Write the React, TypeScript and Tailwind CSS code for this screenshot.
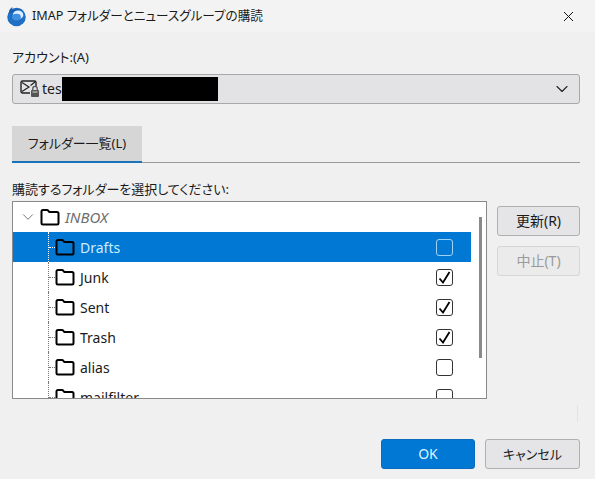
import React from 'react';
import { ChevronDown, X } from 'lucide-react';

const FONT = "font-['Noto_Sans','Noto_Sans_CJK_JP',sans-serif] [font-feature-settings:'palt']";

const FolderIcon = ({ className = '' }: { className?: string }) => (
  <svg width="20" height="18" viewBox="0 0 20 18" fill="none" className={className}>
    <path
      d="M1.5 15V3.5A1.5 1.5 0 0 1 3 2h4c.5 0 .9.2 1.2.6l1 1.4H17a1.5 1.5 0 0 1 1.5 1.5V15a1.5 1.5 0 0 1-1.5 1.5H3A1.5 1.5 0 0 1 1.5 15Z"
      stroke="#000"
      strokeWidth="2"
      strokeLinejoin="round"
    />
  </svg>
);

const AppLogo = () => (
  <svg width="21" height="21" viewBox="0 0 20 20">
    <circle cx="10" cy="10.5" r="8.8" fill="#1f6fc4" />
    <path d="M3 4.5C3.5 3 5 2 6 1 5.8 3 6 3.5 7 4 9 2.5 13 2 16 4 12 3.5 9 5 9 5L3 7Z" fill="#1a5fb0" />
    <ellipse cx="11.5" cy="8.5" rx="5" ry="4.2" fill="#dbeeff" />
    <ellipse cx="10" cy="10.5" rx="4.2" ry="3.2" fill="#3f8fe0" />
  </svg>
);

const AccountIcon = () => (
  <svg width="20" height="18" viewBox="0 0 20 18" fill="none">
    <path d="M10 13H2.5A1.5 1.5 0 0 1 1 11.5v-9A1.5 1.5 0 0 1 2.5 1h12A1.5 1.5 0 0 1 16 2.5V6" stroke="#222" strokeWidth="1.4" />
    <path d="M2 2.5 9 7l-7 4.5M15 2 10.5 5.5" stroke="#222" strokeWidth="1.2" />
    <rect x="11" y="10" width="8" height="7" rx="1" fill="#555" />
    <path d="M12.8 10V8.6a2.2 2.2 0 0 1 4.4 0V10" stroke="#555" strokeWidth="1.3" />
    <rect x="12.5" y="11.5" width="5" height="1" fill="#ddd" />
  </svg>
);

const Checkbox = ({ checked, selected }: { checked?: boolean; selected?: boolean }) => (
  <span
    className={`flex h-[17px] w-[17px] shrink-0 items-center justify-center rounded-[3px] border-[1.5px] ${
      selected ? 'border-[#9fd3f7]' : 'border-[#333333] bg-white'
    }`}
  >
    {checked && (
      <svg width="13" height="13" viewBox="0 0 13 13" fill="none">
        <path d="M1.5 7.5 5 11.5 11.5 1" stroke="#000" strokeWidth="1.8" />
      </svg>
    )}
  </span>
);

const folders = [
  { name: 'Drafts', selected: true },
  { name: 'Junk', checked: true },
  { name: 'Sent', checked: true },
  { name: 'Trash', checked: true },
  { name: 'alias' },
  { name: 'mailfilter' },
];

const FolderRow = ({ name, checked, selected }: { name: string; checked?: boolean; selected?: boolean }) => (
  <div className={`flex h-[30px] shrink-0 items-center pr-[18px] ${selected ? 'bg-[#0078d4] text-[#cdeeff]' : 'text-[#1a1a1a]'}`}>
    <span className={`ml-[35px] h-full border-l border-dotted ${selected ? 'border-white' : 'border-[#777777]'}`} />
    <span className={`w-[6px] border-t border-dotted ${selected ? 'border-white' : 'border-[#777777]'}`} />
    <FolderIcon />
    <span className="ml-[5px] flex-1 pt-[1px] text-[14px]">{name}</span>
    <Checkbox checked={checked} selected={selected} />
  </div>
);

const Button = ({ children, className = '', disabled }: { children: React.ReactNode; className?: string; disabled?: boolean }) => (
  <button
    className={`flex h-[30px] items-center justify-center rounded-[3px] border text-[14px] ${
      disabled ? 'border-[#d6d6d6] bg-[#ebebeb] text-[#9a9a9a]' : 'border-[#b0b0b0] bg-[#e5e5e7] text-[#1a1a1a]'
    } ${className}`}
  >
    {children}
  </button>
);

export default function App() {
  return (
    <div className={`flex h-[479px] w-[595px] flex-col overflow-hidden bg-[#f0f0f0] leading-none text-[#1a1a1a] ${FONT}`}>
      {/* title bar */}
      <div className="flex h-[32px] shrink-0 items-center bg-[#f3f3f3] pl-[6px] pr-[18px]">
        <AppLogo />
        <span className="ml-[5px] flex-1 text-[12.6px]">IMAP フォルダーとニュースグループの購読</span>
        <X size={17} strokeWidth={1.4} color="#111" />
      </div>

      <div className="flex flex-1 flex-col pl-[12px] pr-[15px] pt-[17px]">
        <div className="text-[13px] leading-[16px]">アカウント:(A)</div>

        <div className="mt-[9px] flex h-[30px] items-center rounded-[3px] border border-[#a8a8a8] bg-[#e3e3e5] pl-[7px] pr-[7px]">
          <AccountIcon />
          <span className="ml-[2px] text-[14px]">tes</span>
          <span className="h-[24px] w-[156px] bg-black" />
          <span className="flex-1" />
          <ChevronDown size={20} strokeWidth={1.3} color="#222" />
        </div>

        {/* tab strip */}
        <div className="mt-[22px] flex h-[37px] border-b border-[#9a9a9a]">
          <div className="flex h-[37px] w-[130px] items-center justify-center border-b-[2px] border-[#1a73b8] bg-[#d6d6d6] text-[13px]">
            フォルダー一覧(L)
          </div>
        </div>

        <div className="mt-[18px] text-[13px] leading-[16px]">購読するフォルダーを選択してください:</div>

        <div className="mt-[4px] flex gap-[10px]">
          {/* tree */}
          <div className="flex h-[198px] w-[475px] overflow-hidden border border-[#8a8a8a] bg-white">
            <div className="flex min-w-0 flex-1 flex-col">
              <div className="flex h-[30px] shrink-0 items-center pl-[6px] text-[#6e6e6e]">
                <ChevronDown size={18} strokeWidth={1.2} color="#666" />
                <FolderIcon className="ml-[3px]" />
                <span className="ml-[5px] pt-[1px] text-[15px] italic">INBOX</span>
              </div>
              {folders.map((f) => (
                <FolderRow key={f.name} {...f} />
              ))}
            </div>
            <div className="w-[15px] shrink-0 pl-[8px] pt-[15px]">
              <div className="h-[141px] w-[3px] bg-[#8a8a8a]" />
            </div>
          </div>

          {/* side buttons */}
          <div className="flex flex-1 flex-col gap-[10px] pt-[5px]">
            <Button>更新(R)</Button>
            <Button disabled>中止(T)</Button>
          </div>
        </div>

        <div className="flex h-[22px] justify-end pt-[6px]">
          <span className="mr-[2px] h-[17px] border-r border-[#e2e2e2]" />
        </div>

        <div className="mt-[18px] flex justify-end gap-[10px]">
          <Button className="w-[94px] !border-[#0a6cbc] !bg-[#0078d4] !text-[#dff3ff]">OK</Button>
          <Button className="w-[95px] !text-[13px]">キャンセル</Button>
        </div>
      </div>
    </div>
  );
}
